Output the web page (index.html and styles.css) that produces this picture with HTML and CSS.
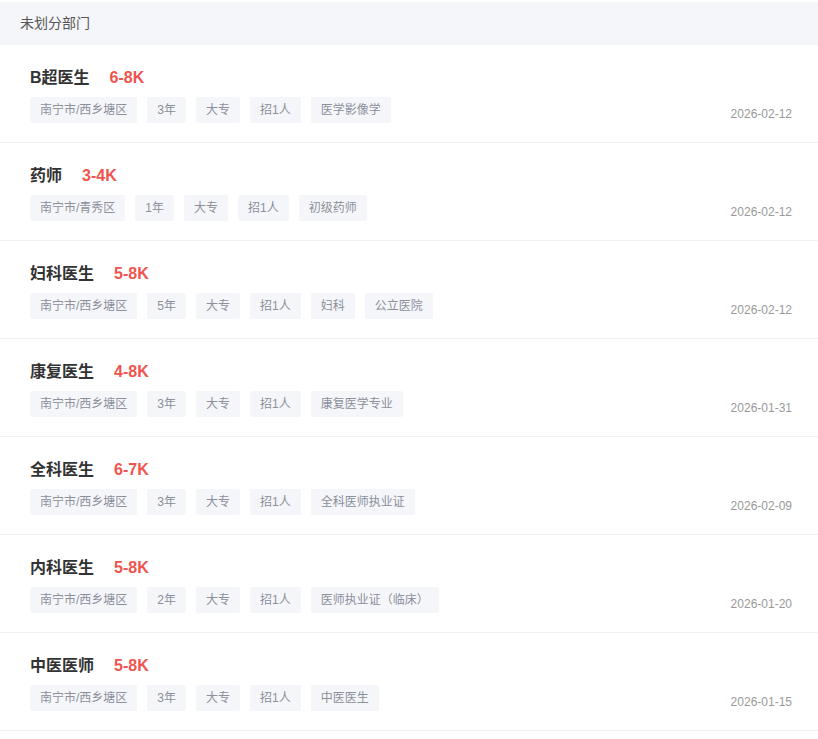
FILE: index.html
```html
<!DOCTYPE html>
<html lang="zh-CN">
<head>
  <meta charset="UTF-8" />
  <meta name="viewport" content="width=device-width, initial-scale=1.0" />
  <title>职位列表</title>
  <link rel="stylesheet" href="styles.css">
</head>
<body>
  <div class="dept-header">未划分部门</div>
  <div class="job-list">
    <div class="job-item">
      <div class="job-main">
        <div class="job-title">B超医生<span class="job-salary">6-8K</span></div>
        <div class="job-tags">
          <span class="tag">南宁市/西乡塘区</span><span class="tag">3年</span><span class="tag">大专</span><span class="tag">招1人</span><span class="tag">医学影像学</span>
        </div>
      </div>
      <div class="job-date">2026-02-12</div>
    </div>
    <div class="job-item">
      <div class="job-main">
        <div class="job-title">药师<span class="job-salary">3-4K</span></div>
        <div class="job-tags">
          <span class="tag">南宁市/青秀区</span><span class="tag">1年</span><span class="tag">大专</span><span class="tag">招1人</span><span class="tag">初级药师</span>
        </div>
      </div>
      <div class="job-date">2026-02-12</div>
    </div>
    <div class="job-item">
      <div class="job-main">
        <div class="job-title">妇科医生<span class="job-salary">5-8K</span></div>
        <div class="job-tags">
          <span class="tag">南宁市/西乡塘区</span><span class="tag">5年</span><span class="tag">大专</span><span class="tag">招1人</span><span class="tag">妇科</span><span class="tag">公立医院</span>
        </div>
      </div>
      <div class="job-date">2026-02-12</div>
    </div>
    <div class="job-item">
      <div class="job-main">
        <div class="job-title">康复医生<span class="job-salary">4-8K</span></div>
        <div class="job-tags">
          <span class="tag">南宁市/西乡塘区</span><span class="tag">3年</span><span class="tag">大专</span><span class="tag">招1人</span><span class="tag">康复医学专业</span>
        </div>
      </div>
      <div class="job-date">2026-01-31</div>
    </div>
    <div class="job-item">
      <div class="job-main">
        <div class="job-title">全科医生<span class="job-salary">6-7K</span></div>
        <div class="job-tags">
          <span class="tag">南宁市/西乡塘区</span><span class="tag">3年</span><span class="tag">大专</span><span class="tag">招1人</span><span class="tag">全科医师执业证</span>
        </div>
      </div>
      <div class="job-date">2026-02-09</div>
    </div>
    <div class="job-item">
      <div class="job-main">
        <div class="job-title">内科医生<span class="job-salary">5-8K</span></div>
        <div class="job-tags">
          <span class="tag">南宁市/西乡塘区</span><span class="tag">2年</span><span class="tag">大专</span><span class="tag">招1人</span><span class="tag">医师执业证（临床）</span>
        </div>
      </div>
      <div class="job-date">2026-01-20</div>
    </div>
    <div class="job-item">
      <div class="job-main">
        <div class="job-title">中医医师<span class="job-salary">5-8K</span></div>
        <div class="job-tags">
          <span class="tag">南宁市/西乡塘区</span><span class="tag">3年</span><span class="tag">大专</span><span class="tag">招1人</span><span class="tag">中医医生</span>
        </div>
      </div>
      <div class="job-date">2026-01-15</div>
    </div>
  </div>
</body>
</html>
```

FILE: styles.css
```css
body {
  margin: 0;
  font-family: "Liberation Sans", "Noto Sans CJK SC", sans-serif;
  background-color: #fff;
  color: #333;
}
.dept-header {
  margin-top: 2px;
  height: 43px;
  line-height: 42px;
  padding-left: 20px;
  background-color: #f5f6f9;
  font-size: 14px;
  color: #555;
}
.job-item {
  display: flex;
  justify-content: space-between;
  align-items: flex-end;
  padding: 21px 26px 19px 30px;
  border-bottom: 1px solid #f0f0f0;
}
.job-title {
  font-size: 16px;
  font-weight: bold;
  line-height: 24px;
  height: 24px;
  color: #333;
}
.job-salary {
  margin-left: 20px;
  color: #f0544f;
}
.job-tags {
  display: flex;
  gap: 10px;
  margin-top: 7px;
}
.tag {
  background-color: #f5f6fa;
  color: #8c909a;
  font-size: 12px;
  line-height: 26px;
  height: 26px;
  padding: 0 10px;
  border-radius: 2px;
}
.job-date {
  font-size: 12px;
  line-height: 18px;
  color: #999;
}
```
